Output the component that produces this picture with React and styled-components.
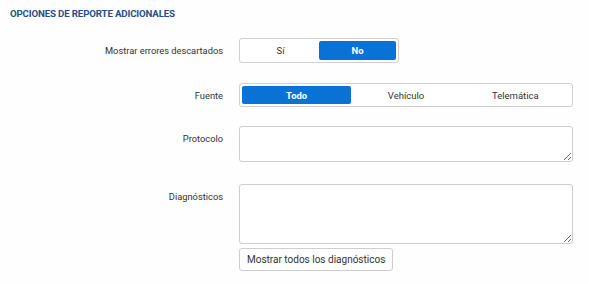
import React from 'react'
import styled, { createGlobalStyle } from 'styled-components'

const Global = createGlobalStyle`
  body {
    margin: 0;
    background: #fefefe;
    font-family: Roboto, "Liberation Sans", sans-serif;
  }
`

const Page = styled.section`
  padding: 8px 0 0 10px;
  width: 589px;
  height: 284px;
  box-sizing: border-box;
`

const Title = styled.h2`
  margin: 0;
  font-size: 9.7px;
  line-height: 12px;
  font-weight: 700;
  color: #1f4f8c;
  letter-spacing: -0.15px;
`

const Form = styled.div`
  display: flex;
  flex-direction: column;
  margin-top: 18px;
`

const Row = styled.div`
  display: flex;
  align-items: ${p => (p.top ? 'flex-start' : 'center')};
  gap: 16px;
  margin-bottom: ${p => p.gap || 0}px;
`

const Label = styled.label`
  width: 213px;
  flex: none;
  font-size: 9.3px;
  color: #333;
  text-align: right;
  padding-top: ${p => (p.top ? '7px' : '0')};
  line-height: 11px;
`

const Field = styled.div`
  display: flex;
  flex-direction: column;
  align-items: flex-start;
`

const Toggle = styled.div`
  display: flex;
  box-sizing: border-box;
  width: ${p => p.width}px;
  height: ${p => p.height}px;
  padding: 2px;
  border: 1px solid #cfcfd4;
  border-radius: 3px;
  background: #fff;
`

const Option = styled.button`
  flex: 1;
  border: none;
  border-radius: 2px;
  font-family: inherit;
  font-size: 9.5px;
  font-weight: ${p => (p.active ? 700 : 400)};
  color: ${p => (p.active ? '#fff' : '#333')};
  background: ${p => (p.active ? '#0a72d4' : 'transparent')};
  padding: 0;
  cursor: pointer;
`

const Area = styled.textarea`
  box-sizing: border-box;
  width: 334px;
  height: ${p => p.height}px;
  border: 1px solid #cdcdd2;
  border-radius: 3px;
  background: #fff;
  resize: vertical;
  font-family: inherit;
  margin: 0;
  display: block;
`

const Button = styled.button`
  margin-top: 4px;
  height: 23px;
  padding: 0 7px;
  border: 1px solid #cdcdd2;
  border-radius: 3px;
  background: #fff;
  font-family: inherit;
  font-size: 10px;
  color: #333;
  cursor: pointer;
`

export default function App() {
  return (
    <Page>
      <Global />
      <Title>OPCIONES DE REPORTE ADICIONALES</Title>
      <Form>
        <Row gap={20}>
          <Label>Mostrar errores descartados</Label>
          <Toggle width={160} height={25}>
            <Option>Sí</Option>
            <Option active>No</Option>
          </Toggle>
        </Row>
        <Row gap={19}>
          <Label>Fuente</Label>
          <Toggle width={334} height={24}>
            <Option active>Todo</Option>
            <Option>Vehículo</Option>
            <Option>Telemática</Option>
          </Toggle>
        </Row>
        <Row top gap={22}>
          <Label top>Protocolo</Label>
          <Area height={36} />
        </Row>
        <Row top>
          <Label top>Diagnósticos</Label>
          <Field>
            <Area height={60} />
            <Button>Mostrar todos los diagnósticos</Button>
          </Field>
        </Row>
      </Form>
    </Page>
  )
}
